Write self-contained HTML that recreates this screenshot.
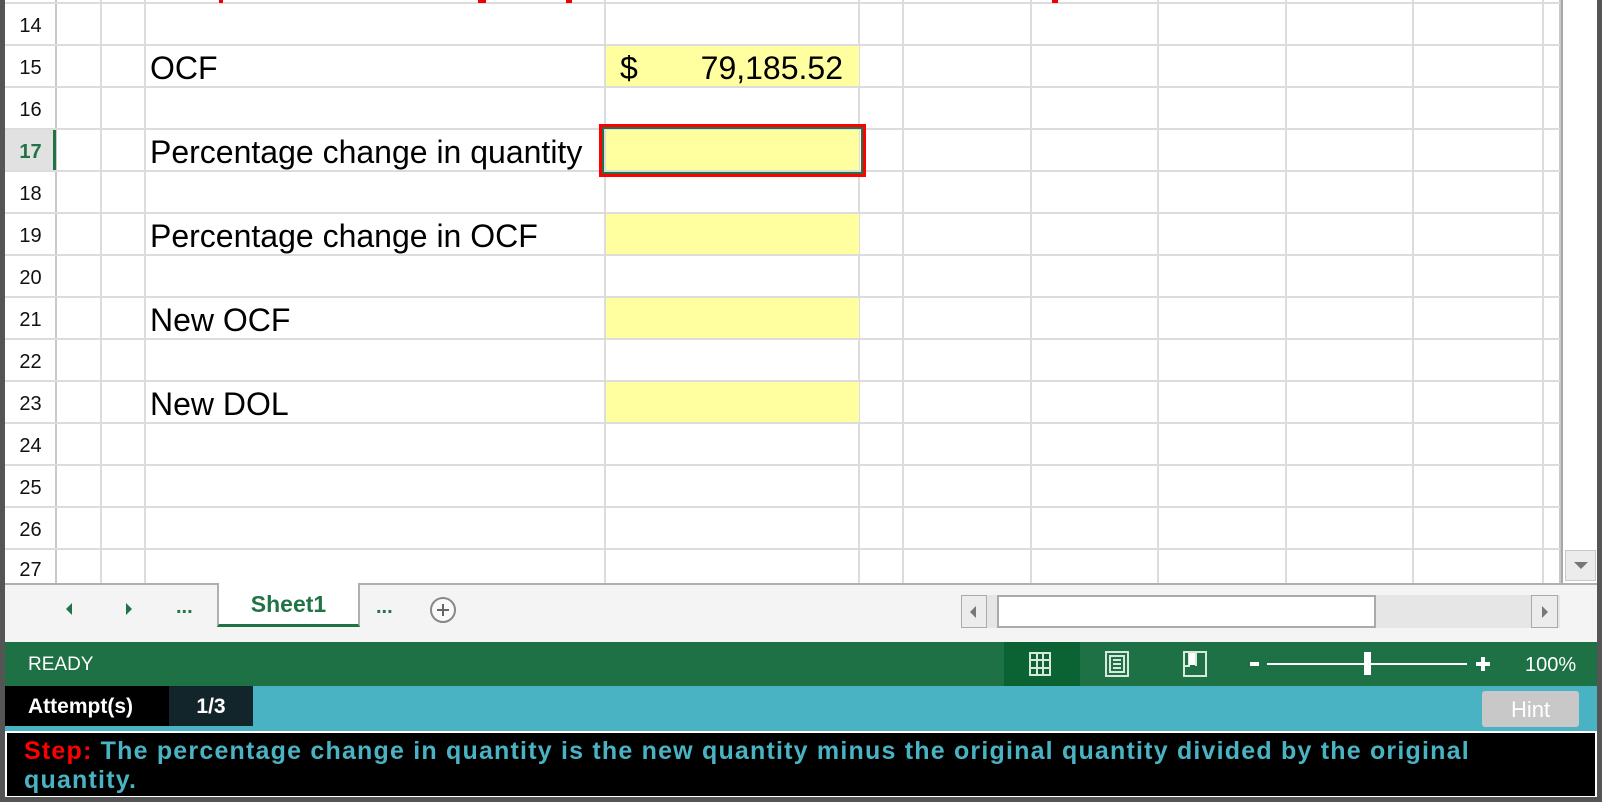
<!DOCTYPE html>
<html><head><meta charset="utf-8"><style>
*{margin:0;padding:0;box-sizing:border-box}
body{width:1602px;height:802px;overflow:hidden;background:#fff;font-family:"Liberation Sans",Arial,sans-serif;position:relative}
.a{position:absolute}
.vl{position:absolute;top:0;height:583px;width:2px;background:#dcdcdc}
.hl{position:absolute;left:5px;width:1555px;height:2px;background:#dcdcdc}
.rn{position:absolute;left:5px;width:51px;text-align:center;font-size:20px;color:#111}
.lbl{position:absolute;left:150px;font-size:32px;color:#000}
.y{position:absolute;left:606px;width:253px;height:40px;background:#ffff9f}
</style></head><body>
<div class="a" style="left:5px;top:0;width:51px;height:583px;background:#fff"></div>
<div class="vl" style="left:55px;background:#c8c8c8"></div>
<div class="vl" style="left:100px"></div>
<div class="vl" style="left:144px"></div>
<div class="vl" style="left:604px"></div>
<div class="vl" style="left:858px"></div>
<div class="vl" style="left:902px"></div>
<div class="vl" style="left:1030px"></div>
<div class="vl" style="left:1157px"></div>
<div class="vl" style="left:1285px"></div>
<div class="vl" style="left:1412px"></div>
<div class="vl" style="left:1542px"></div>
<div class="vl" style="left:1559px;background:#c8c8c8"></div>
<div class="hl" style="top:2px"></div>
<div class="hl" style="top:44px"></div>
<div class="hl" style="top:86px"></div>
<div class="hl" style="top:128px"></div>
<div class="hl" style="top:170px"></div>
<div class="hl" style="top:212px"></div>
<div class="hl" style="top:254px"></div>
<div class="hl" style="top:296px"></div>
<div class="hl" style="top:338px"></div>
<div class="hl" style="top:380px"></div>
<div class="hl" style="top:422px"></div>
<div class="hl" style="top:464px"></div>
<div class="hl" style="top:506px"></div>
<div class="hl" style="top:548px"></div>
<div class="a" style="left:219px;top:0;width:4px;height:3px;background:#e00"></div>
<div class="a" style="left:478px;top:0;width:8px;height:3px;background:#e00"></div>
<div class="a" style="left:566px;top:0;width:6px;height:3px;background:#e00"></div>
<div class="a" style="left:1052px;top:0;width:6px;height:3px;background:#e00"></div>
<div class="a" style="left:5px;top:130px;width:50px;height:40px;background:#e1e1e1"></div>
<div class="a" style="left:53px;top:130px;width:3px;height:40px;background:#217346"></div>
<div class="rn" style="top:15px">14</div>
<div class="rn" style="top:57px">15</div>
<div class="rn" style="top:99px">16</div>
<div class="rn" style="top:141px;color:#217346;font-weight:bold">17</div>
<div class="rn" style="top:183px">18</div>
<div class="rn" style="top:225px">19</div>
<div class="rn" style="top:267px">20</div>
<div class="rn" style="top:309px">21</div>
<div class="rn" style="top:351px">22</div>
<div class="rn" style="top:393px">23</div>
<div class="rn" style="top:435px">24</div>
<div class="rn" style="top:477px">25</div>
<div class="rn" style="top:519px">26</div>
<div class="rn" style="top:559px">27</div>
<div class="y" style="top:46px"></div>
<div class="y" style="top:130px"></div>
<div class="y" style="top:214px"></div>
<div class="y" style="top:298px"></div>
<div class="y" style="top:382px"></div>
<div class="lbl" style="top:50px">OCF</div>
<div class="a" style="left:620px;top:50px;font-size:32px">$</div>
<div class="a" style="left:600px;width:243px;text-align:right;top:50px;font-size:32px">79,185.52</div>
<div class="lbl" style="top:134px">Percentage change in quantity</div>
<div class="lbl" style="top:218px">Percentage change in OCF</div>
<div class="lbl" style="top:302px">New OCF</div>
<div class="lbl" style="top:386px">New DOL</div>
<div class="a" style="left:599px;top:124px;width:267px;height:53px;border:3px solid #f00"></div>
<div class="a" style="left:602px;top:127px;width:261px;height:47px;border:2px solid #217346"></div>
<div class="a" style="left:1561px;top:0;width:36px;height:583px;background:#fff;border-left:2px solid #a8a8a8"></div>
<div class="a" style="left:1565px;top:550px;width:31px;height:31px;background:#ececec;border:1px solid #c8c8c8"></div>
<div class="a" style="left:1574px;top:562px;width:0;height:0;border-left:7px solid transparent;border-right:7px solid transparent;border-top:7px solid #777"></div>
<div class="a" style="left:5px;top:583px;width:1592px;height:59px;background:#f4f4f4;border-top:2px solid #b0b0b0"></div>
<div class="a" style="left:66px;top:603px;border-top:6px solid transparent;border-bottom:6px solid transparent;border-right:6px solid #217346"></div>
<div class="a" style="left:126px;top:603px;border-top:6px solid transparent;border-bottom:6px solid transparent;border-left:6px solid #217346"></div>
<div class="a" style="left:176px;top:596px;font-size:20px;font-weight:bold;color:#217346">...</div>
<div class="a" style="left:217px;top:583px;width:143px;height:44px;background:#fff;border:2px solid #b0b0b0;border-top:none;border-bottom:3px solid #217346"></div>
<div class="a" style="left:217px;top:591px;width:143px;text-align:center;font-size:23px;font-weight:bold;color:#217346">Sheet1</div>
<div class="a" style="left:376px;top:596px;font-size:20px;font-weight:bold;color:#217346">...</div>
<div class="a" style="left:430px;top:597px;width:26px;height:26px;border:2px solid #888;border-radius:50%;background:#fafafa"></div>
<div class="a" style="left:437px;top:609px;width:12px;height:2px;background:#666"></div>
<div class="a" style="left:442px;top:604px;width:2px;height:12px;background:#666"></div>
<div class="a" style="left:961px;top:595px;width:599px;height:33px;background:#e6e6e6"></div>
<div class="a" style="left:961px;top:595px;width:26px;height:33px;background:#ececec;border:1px solid #aaa"></div>
<div class="a" style="left:970px;top:606px;border-top:6px solid transparent;border-bottom:6px solid transparent;border-right:6px solid #777"></div>
<div class="a" style="left:997px;top:595px;width:379px;height:33px;background:#fff;border:2px solid #aaa"></div>
<div class="a" style="left:1531px;top:595px;width:27px;height:33px;background:#ececec;border:1px solid #aaa"></div>
<div class="a" style="left:1542px;top:606px;border-top:6px solid transparent;border-bottom:6px solid transparent;border-left:6px solid #777"></div>
<div class="a" style="left:5px;top:642px;width:1592px;height:44px;background:#1e7145"></div>
<div class="a" style="left:28px;top:654px;font-size:19px;color:#fff">READY</div>
<div class="a" style="left:1004px;top:642px;width:76px;height:44px;background:#0b6233"></div>
<svg class="a" style="left:1029px;top:652px" width="22" height="24" viewBox="0 0 22 24" fill="none" stroke="#d8e8dc" stroke-width="2"><rect x="1" y="1" width="20" height="22"/><path d="M8 1V23M14 1V23M1 8H21M1 16H21"/></svg>
<svg class="a" style="left:1105px;top:651px" width="24" height="26" viewBox="0 0 24 26" fill="none" stroke="#d8e8dc" stroke-width="2"><rect x="1" y="1" width="22" height="24"/><rect x="5" y="5" width="14" height="16"/><path d="M8 9H16M8 13H16M8 17H16"/></svg>
<svg class="a" style="left:1183px;top:651px" width="24" height="26" viewBox="0 0 24 26" fill="none" stroke="#d8e8dc" stroke-width="2"><rect x="1" y="1" width="22" height="24"/><path d="M6 1V15H1M13 1V15M6 9H13" /><rect x="6" y="2" width="6" height="12" fill="#fff" stroke="none"/></svg>
<div class="a" style="left:1250px;top:662px;width:9px;height:4px;background:#fff"></div>
<div class="a" style="left:1267px;top:663px;width:200px;height:2px;background:#fff"></div>
<div class="a" style="left:1364px;top:652px;width:7px;height:23px;background:#fff"></div>
<div class="a" style="left:1476px;top:662px;width:14px;height:4px;background:#fff"></div>
<div class="a" style="left:1481px;top:657px;width:4px;height:14px;background:#fff"></div>
<div class="a" style="left:1525px;top:654px;font-size:20px;color:#fff">100%</div>
<div class="a" style="left:5px;top:686px;width:1592px;height:45px;background:#4ab3c3"></div>
<div class="a" style="left:5px;top:686px;width:164px;height:40px;background:#000;color:#fff;font-weight:bold;font-size:21px;padding:9px 0 0 23px">Attempt(s)</div>
<div class="a" style="left:169px;top:686px;width:84px;height:40px;background:#12252b;color:#fff;font-weight:bold;font-size:21px;text-align:center;padding-top:9px">1/3</div>
<div class="a" style="left:1482px;top:691px;width:97px;height:36px;background:#c8c8c8;border-radius:3px;color:#fff;font-size:22px;text-align:center;padding-top:6px">Hint</div>
<div class="a" style="left:5px;top:731px;width:1592px;height:67px;background:#000;border:2px solid #fff"></div>
<div class="a" style="left:24px;top:737px;width:1520px;font-size:25px;letter-spacing:1.2px;font-weight:bold;color:#4ab3c3;line-height:29px"><span style="color:#f00">Step:</span> The percentage change in quantity is the new quantity minus the original quantity divided by the original quantity.</div>
<div class="a" style="left:0;top:0;width:5px;height:802px;background:#555"></div>
<div class="a" style="left:1597px;top:0;width:5px;height:802px;background:#555"></div>
<div class="a" style="left:0;top:797px;width:1602px;height:5px;background:#555"></div>
</body></html>
